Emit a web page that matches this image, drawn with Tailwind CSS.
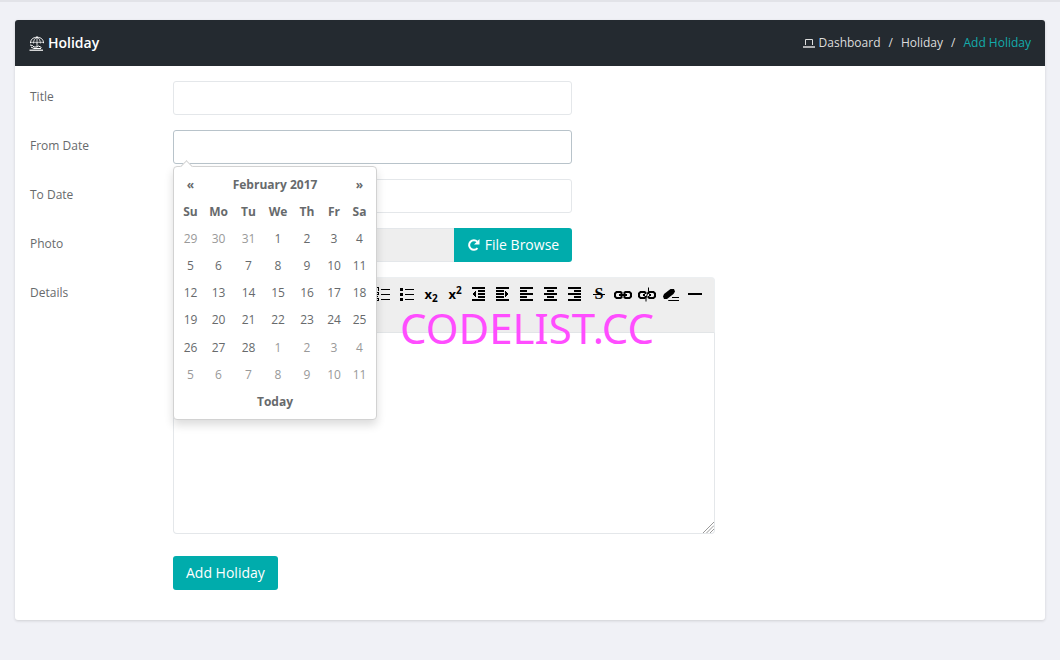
<!DOCTYPE html>
<html lang="en">
<head>
<meta charset="utf-8">
<meta name="viewport" content="width=device-width, initial-scale=1">
<title>Add Holiday</title>
<script src="https://cdn.jsdelivr.net/npm/@tailwindcss/browser@4"></script>
</head>
<body class="min-h-screen bg-[#f0f1f6] font-['Open_Sans',sans-serif] text-xs text-[#676a6c] border-t-2 border-[#e2e3e8] px-[15px] pt-[18px] pb-10">
<main class="rounded-[3px] bg-white shadow-[0_1px_3px_rgba(0,0,0,0.14)]">
  <header class="flex h-[46px] items-center justify-between rounded-t-[3px] bg-[#242a30] px-[14px] text-white">
    <h1 class="flex items-center gap-1 text-sm font-semibold">
      <svg class="size-[15px]" viewBox="0 0 15 15" fill="none" stroke="currentColor" aria-hidden="true">
        <path stroke-width="1" d="M1.500 7C1.500 3.500 4 1.300 8 1.300S14.500 3.500 14.500 7"/>
        <path stroke-width=".8" d="M1.500 7c1-1 2-1 3 0 1-1 2.200-1 3.500 0 1.200-1 2.300-1 3.300 0 1-1 2.200-1 3.200 0M8 0v11M4.500 7c0-2.600 1.200-4.700 3.500-5.700 2.300 1 3.300 3.100 3.300 5.700"/>
        <path stroke-width="1" d="M1 9l2.500.5L5 11h3l1.500-1 3 1.500M2 11l3 1.500h7"/>
        <path stroke-width="1.200" d="M.5 14.200h13.500"/>
      </svg>
      Holiday
    </h1>
    <nav aria-label="Breadcrumb">
      <ol class="flex items-center gap-2 font-medium text-[#dddddd]">
        <li><a href="#" class="flex items-center gap-1">
          <svg class="h-3 w-3" viewBox="0 0 12 12" fill="none" stroke="currentColor" aria-hidden="true"><path d="M2.500 8V2.500h7V8" /><path stroke-width="1.500" d="M0 10h12"/></svg>
          Dashboard</a></li>
        <li aria-hidden="true">/</li>
        <li><a href="#">Holiday</a></li>
        <li aria-hidden="true">/</li>
        <li><a href="#" aria-current="page" class="text-[#13acac]">Add Holiday</a></li>
      </ol>
    </nav>
  </header>

  <form class="grid grid-cols-[143px_minmax(0,1fr)] gap-y-[15px] px-[15px] pt-[15px] pb-[30px]">
    <label for="title" class="pt-2">Title</label>
    <input id="title" type="text" class="h-[34px] w-full max-w-[399px] rounded-[3px] border border-[#e4e7ea] px-3">

    <label for="from" class="pt-2">From Date</label>
    <div class="relative w-full max-w-[399px]">
      <input id="from" type="text" class="block h-[34px] w-full rounded-[3px] border border-[#b8c3ca] px-3 outline-none">
      <div class="absolute left-0 top-9 z-10 w-[204px] rounded border border-[#d2d2d2] bg-white p-1 shadow-[0_5px_10px_rgba(0,0,0,0.14)]">
        <span class="absolute -top-[5px] left-2 size-[9px] rotate-45 border-l border-t border-[#d2d2d2] bg-white"></span>
        <table class="relative w-full table-fixed text-center">
          <colgroup><col class="w-[25px]"><col class="w-[31px]"><col class="w-[29px]"><col class="w-[30px]"><col class="w-[28px]"><col class="w-[26px]"><col class="w-[25px]"></colgroup>
          <thead>
            <tr class="h-[27px]"><th><button type="button" aria-label="Previous month">«</button></th><th colspan="5">February 2017</th><th><button type="button" aria-label="Next month">»</button></th></tr>
            <tr class="h-[27px]"><th>Su</th><th>Mo</th><th>Tu</th><th>We</th><th>Th</th><th>Fr</th><th>Sa</th></tr>
          </thead>
          <tbody>
            <tr class="h-[27px]"><td class="text-[#999]">29</td><td class="text-[#999]">30</td><td class="text-[#999]">31</td><td>1</td><td>2</td><td>3</td><td>4</td></tr>
            <tr class="h-[27px]"><td>5</td><td>6</td><td>7</td><td>8</td><td>9</td><td>10</td><td>11</td></tr>
            <tr class="h-[27px]"><td>12</td><td>13</td><td>14</td><td>15</td><td>16</td><td>17</td><td>18</td></tr>
            <tr class="h-[28px]"><td>19</td><td>20</td><td>21</td><td>22</td><td>23</td><td>24</td><td>25</td></tr>
            <tr class="h-[27px]"><td>26</td><td>27</td><td>28</td><td class="text-[#999]">1</td><td class="text-[#999]">2</td><td class="text-[#999]">3</td><td class="text-[#999]">4</td></tr>
            <tr class="h-[27px] text-[#999]"><td>5</td><td>6</td><td>7</td><td>8</td><td>9</td><td>10</td><td>11</td></tr>
          </tbody>
          <tfoot><tr class="h-[27px]"><th colspan="7"><button type="button">Today</button></th></tr></tfoot>
        </table>
      </div>
    </div>

    <label for="to" class="pt-2">To Date</label>
    <input id="to" type="text" class="h-[34px] w-full max-w-[399px] rounded-[3px] border border-[#e4e7ea] px-3">

    <label for="photo" class="pt-2">Photo</label>
    <div class="flex w-full max-w-[399px]">
      <input id="photo" type="text" readonly class="h-[34px] min-w-0 flex-1 rounded-l-[3px] border border-r-0 border-[#e4e7ea] bg-[#eeeeee] px-3">
      <button type="button" class="flex h-[34px] w-[118px] items-center justify-center gap-1 rounded-r-[3px] bg-[#00acac] text-sm font-medium text-white">
        <svg class="size-[14px]" viewBox="0 0 14 14" aria-hidden="true"><path d="M10.500 10.200A4.800 4.800 0 1 1 10.300 3.600" fill="none" stroke="currentColor" stroke-width="2"/><path d="M12.500 1v5.500H7z" fill="currentColor"/></svg>
        File Browse
      </button>
    </div>

    <label for="details" class="pt-2">Details</label>
    <div class="relative w-full max-w-[542px]">
      <div role="toolbar" aria-label="Text formatting" class="flex h-14 items-start rounded-t-[4px] border border-b-[#e2e5e7] border-[#eceff1] bg-[#eeeeee] pt-1 pl-[197px] text-black">
        <button type="button" aria-label="Numbered list" class="flex h-6 w-6 items-center justify-center"><svg class="size-4" viewBox="0 0 16 16" fill="none" stroke="currentColor" shape-rendering="crispEdges"><path d="M6 3.500h9M6 8.500h9M6 13.500h9M1 1.500h2v3M1 6.500h2v2H1v2h2M1 12.500h2v2H1"/></svg></button>
        <button type="button" aria-label="Bulleted list" class="flex h-6 w-6 items-center justify-center"><svg class="size-4" viewBox="0 0 16 16" fill="none" stroke="currentColor" shape-rendering="crispEdges"><path d="M6 3.500h9M6 8.500h9M6 13.500h9"/><path stroke-width="3" d="M1 3.500h3M1 8.500h3M1 13.500h3"/></svg></button>
        <button type="button" aria-label="Subscript" class="flex h-6 w-6 items-center justify-center text-[13px] font-bold leading-4">x<span class="pt-2 text-[10px] leading-4">2</span></button>
        <button type="button" aria-label="Superscript" class="flex h-6 w-6 items-center justify-center text-[13px] font-bold leading-4">x<span class="pb-2 text-[10px] leading-4">2</span></button>
        <button type="button" aria-label="Outdent" class="flex h-6 w-6 items-center justify-center"><svg class="size-4" viewBox="0 0 16 16" fill="none" stroke="currentColor" stroke-width="2" shape-rendering="crispEdges"><path d="M1 2h13M7 5h7M7 8h7M7 11h7M1 14h13"/><path d="M1 8l4-3v6z" fill="currentColor" stroke="none"/></svg></button>
        <button type="button" aria-label="Indent" class="flex h-6 w-6 items-center justify-center"><svg class="size-4" viewBox="0 0 16 16" fill="none" stroke="currentColor" stroke-width="2" shape-rendering="crispEdges"><path d="M1 2h13M1 5h8M1 8h8M1 11h8M1 14h13"/><path d="M14 8l-4-3v6z" fill="currentColor" stroke="none"/></svg></button>
        <button type="button" aria-label="Align left" class="flex h-6 w-6 items-center justify-center"><svg class="size-4" viewBox="0 0 16 16" fill="none" stroke="currentColor" stroke-width="2" shape-rendering="crispEdges"><path d="M1 2h13M1 5h7M1 8h13M1 11h7M1 14h13"/></svg></button>
        <button type="button" aria-label="Align center" class="flex h-6 w-6 items-center justify-center"><svg class="size-4" viewBox="0 0 16 16" fill="none" stroke="currentColor" stroke-width="2" shape-rendering="crispEdges"><path d="M1 2h13M4 5h7M1 8h13M4 11h7M1 14h13"/></svg></button>
        <button type="button" aria-label="Align right" class="flex h-6 w-6 items-center justify-center"><svg class="size-4" viewBox="0 0 16 16" fill="none" stroke="currentColor" stroke-width="2" shape-rendering="crispEdges"><path d="M1 2h13M7 5h7M1 8h13M7 11h7M1 14h13"/></svg></button>
        <button type="button" aria-label="Strikethrough" class="flex h-6 w-6 items-center justify-center font-['Liberation_Serif',serif] text-base font-bold"><span class="bg-[linear-gradient(#000,#000)] bg-[length:100%_1px] bg-center bg-no-repeat px-[2px] leading-4">S</span></button>
        <button type="button" aria-label="Link" class="flex h-6 w-6 items-center justify-center"><svg class="h-4 w-[18px]" viewBox="0 0 18 16" fill="none" stroke="currentColor" stroke-width="2"><path d="M7.500 8V6.500L6.500 6H2.500L1 7.500v3L2.500 12h4l1-.5V10M10.500 8V6.500l1-.5h4L17 7.500v3L15.500 12h-4l-1-.5V10M5 9h8"/></svg></button>
        <button type="button" aria-label="Unlink" class="flex h-6 w-6 items-center justify-center"><svg class="h-4 w-[18px]" viewBox="0 0 18 16" fill="none" stroke="currentColor" stroke-width="2"><path d="M7.500 8V6.500L6.500 6H2.500L1 7.500v3L2.500 12h4l1-.5V10M10.500 8V6.500l1-.5h4L17 7.500v3L15.500 12h-4l-1-.5V10M5 9h2M11 9h2"/><path stroke-width="1" d="M10.500 1.500v4l-2.500 6v4"/></svg></button>
        <button type="button" aria-label="Clear formatting" class="flex h-6 w-6 items-center justify-center"><svg class="size-4" viewBox="0 0 16 16" fill="currentColor"><path d="M0 10.500 1 8l6.500-5H11l1 2.500L10.500 8 4 13H1z"/><path d="M9 11h7v1H9zM5.500 14H16v1H5z"/></svg></button>
        <button type="button" aria-label="Horizontal rule" class="flex h-6 w-6 items-center justify-center"><svg class="size-4" viewBox="0 0 16 16" shape-rendering="crispEdges"><path d="M1 7h14v2H1z"/></svg></button>
      </div>
      <textarea id="details" class="block h-[201px] w-full resize-none rounded-b-[4px] border border-t-0 border-[#e4e7ea] p-3 outline-none"></textarea>
      <svg class="pointer-events-none absolute right-px bottom-px size-[11px]" viewBox="0 0 11 11" stroke="#999999" aria-hidden="true"><path d="M0 11 11 0M3.500 11 11 3.500M7 11l4-4"/></svg>
      <span class="pointer-events-none absolute left-[227px] top-[23px] whitespace-nowrap font-['Noto_Sans',sans-serif] text-[42px] leading-[56px] text-[#ff4dff]">CODELIST.CC</span>
    </div>

    <div class="col-start-2 pt-[7px]">
      <button type="submit" class="h-[34px] rounded-[3px] bg-[#00acac] px-[13px] text-sm font-medium text-white">Add Holiday</button>
    </div>
  </form>
</main>
</body>
</html>
